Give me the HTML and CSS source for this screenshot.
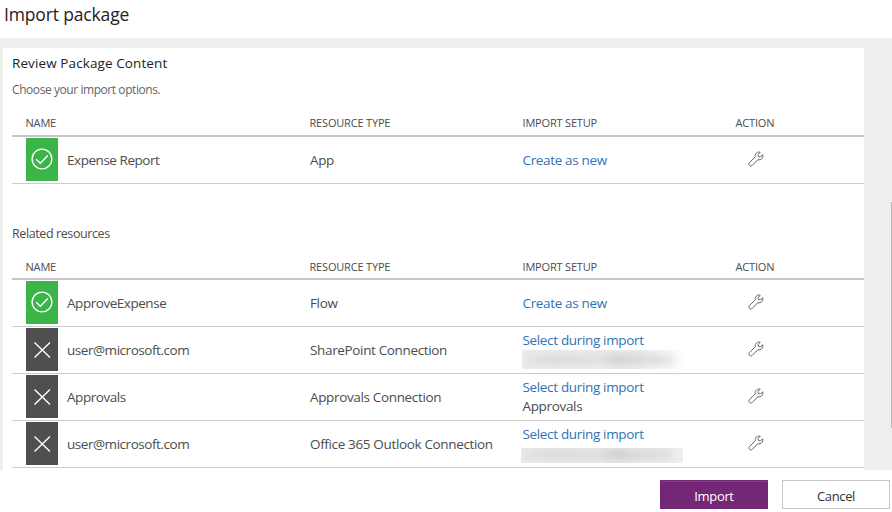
FILE: index.html
```html
<!DOCTYPE html>
<html lang="en">
<head>
<meta charset="utf-8">
<title>Import package</title>
<link rel="stylesheet" href="styles.css">
</head>
<body>
<svg class="defs" width="0" height="0" aria-hidden="true">
  <symbol id="check" viewBox="0 0 22 22"><circle cx="11" cy="11" r="9.9"/><path d="M5.2 11.2 9.3 15.2 16.8 7.6"/></symbol>
  <symbol id="cross" viewBox="0 0 22 22"><path d="M3.5 3.5 19 18.5M19 3.5 3.5 18.5"/></symbol>
  <symbol id="wrench" viewBox="0 0 16 16"><path d="M12.3 1.3C9.4.2 6.6 2.6 7.4 5.7L1.5 11.5C-.2 13.3 2.2 16.2 4.3 14.4L9.8 8.7C13 9.6 15.5 6.8 14.7 3.7L12.4 6 10.4 5.5 9.9 3.6Z"/></symbol>
</svg>
<header class="page-head"><h1>Import package</h1></header>
<main class="stage">
  <section class="card">
    <h2>Review Package Content</h2>
    <p class="hint">Choose your import options.</p>
    <div class="table">
      <div class="row head"><span>NAME</span><span>RESOURCE TYPE</span><span>IMPORT SETUP</span><span>ACTION</span></div>
      <div class="row">
        <div class="name"><i class="status ok"><svg><use href="#check"/></svg></i><span>Expense Report</span></div>
        <div class="type">App</div><div class="setup"><a>Create as new</a></div>
        <div class="action"><svg><use href="#wrench"/></svg></div>
      </div>
    </div>
    <h3>Related resources</h3>
    <div class="table related">
      <div class="row head"><span>NAME</span><span>RESOURCE TYPE</span><span>IMPORT SETUP</span><span>ACTION</span></div>
      <div class="row">
        <div class="name"><i class="status ok"><svg><use href="#check"/></svg></i><span>ApproveExpense</span></div>
        <div class="type">Flow</div><div class="setup"><a>Create as new</a></div>
        <div class="action"><svg><use href="#wrench"/></svg></div>
      </div>
      <div class="row">
        <div class="name"><i class="status"><svg><use href="#cross"/></svg></i><span>user@microsoft.com</span></div>
        <div class="type">SharePoint Connection</div>
        <div class="setup"><a>Select during import</a><span class="redacted soft"><b></b></span></div>
        <div class="action"><svg><use href="#wrench"/></svg></div>
      </div>
      <div class="row">
        <div class="name"><i class="status"><svg><use href="#cross"/></svg></i><span>Approvals</span></div>
        <div class="type">Approvals Connection</div>
        <div class="setup"><a>Select during import</a><span>Approvals</span></div>
        <div class="action"><svg><use href="#wrench"/></svg></div>
      </div>
      <div class="row">
        <div class="name"><i class="status"><svg><use href="#cross"/></svg></i><span>user@microsoft.com</span></div>
        <div class="type">Office 365 Outlook Connection</div>
        <div class="setup"><a>Select during import</a><span class="redacted"><b></b></span></div>
        <div class="action"><svg><use href="#wrench"/></svg></div>
      </div>
    </div>
  </section>
  <div class="scroll-thumb"></div>
</main>
<footer class="buttons"><button class="primary">Import</button><button>Cancel</button></footer>
</body>
</html>
```
FILE: styles.css
```css
* { box-sizing: border-box; }
body {
  margin: 0;
  height: 512px;
  overflow: hidden;
  display: flex;
  flex-direction: column;
  background: #fff;
  color: #4c4c4c;
  font: 13.5px/19px "Open Sans", "Noto Sans", sans-serif;
}
.defs { position: absolute; }
h1, h2, h3, p { margin: 0; font-weight: 400; }
.page-head { height: 38px; padding: 2px 4px 0; }
h1 { font-size: 17.5px; line-height: 24px; color: #222; letter-spacing: -0.15px; }
.stage {
  height: 432px;
  display: flex;
  justify-content: space-between;
  padding: 10px 0 0 3px;
  background: #eee;
}
.card { width: 861px; padding: 5px 0 0 9px; background: #fff; }
h2 { font-size: 13.5px; line-height: 20px; color: #222; letter-spacing: 0.1px; }
.hint { margin-top: 8px; font-size: 12px; line-height: 18px; color: #666; letter-spacing: -0.43px; }
.table { width: 852px; }
.row {
  display: grid;
  grid-template-columns: 284px 213px 213px 142px;
  height: 47px;
  align-items: center;
  border-bottom: 1px solid #ccc;
}
.row > * { padding-left: 14px; white-space: nowrap; }
.head {
  height: 38px;
  border-bottom: 2px solid #c6c6c6;
  font-size: 11px;
  line-height: 16px;
  padding-top: 16px;
  align-items: start;
  letter-spacing: -0.18px;
}
.head > * { padding-left: 13.5px; }
.related .head { padding-top: 17px; }
.name { display: flex; align-items: center; gap: 9px; letter-spacing: -0.46px; }
.type { letter-spacing: -0.35px; }
.status {
  width: 32px;
  height: 43px;
  margin: 0 0 1px;
  background: #4f4f4f;
  display: flex;
  align-items: center;
  justify-content: center;
}
.ok { background: #3bb44a; }
.status svg { width: 22px; height: 22px; fill: none; stroke: #fff; stroke-width: 1.4; }
.ok svg { margin: -1px 1px 0 0; }
a { color: #2e74b5; }
.action svg {
  display: block;
  width: 16px;
  height: 16px;
  margin: -3px 0 0 12px;
  fill: none;
  stroke: #666;
  stroke-width: 1;
}
h3 { margin-top: 40px; margin-bottom: -1px; font-size: 12.5px; line-height: 19px; letter-spacing: -0.4px; }
.row > .setup { display: flex; flex-direction: column; padding-left: 13.5px; letter-spacing: -0.34px; }
.redacted { height: 19px; width: 163px; margin-left: -1.5px; overflow: hidden; background: linear-gradient(90deg, #ebebeb, #e6e6e6 60%, #eee); }
.redacted b {
  display: block;
  height: 7px;
  margin: 6px 12px 0 2px;
  filter: blur(4px);
  background: linear-gradient(90deg, #e0e0e0, #d3d3d3 20%, #ddd 50%, #c6c6c6 62%, #d3d3d3 80%, #d8d8d8);
}
.soft { margin-left: -0.5px; background: linear-gradient(90deg, #ececec, #ebebeb 70%, #fff); }
.row:last-child .redacted { height: 15px; margin-top: 4px; width: 162px; }
.row:last-child .redacted b { margin-top: 3px; }
.scroll-thumb { width: 1px; height: 226px; margin-top: 154px; background: #b5b5b5; }
.buttons { display: flex; justify-content: flex-end; gap: 14px; padding: 10px 2px 0 0; }
button {
  width: 108px;
  height: 29px;
  padding: 3px 0 0;
  border: 1px solid #c8c8c8;
  background: #fff;
  color: #333;
  font: 13px/19px "Open Sans", sans-serif;
  letter-spacing: -0.35px;
}
.primary { background: #742774; border-color: #742774; color: #fff; box-shadow: inset 0 1px #84408a; }
```
